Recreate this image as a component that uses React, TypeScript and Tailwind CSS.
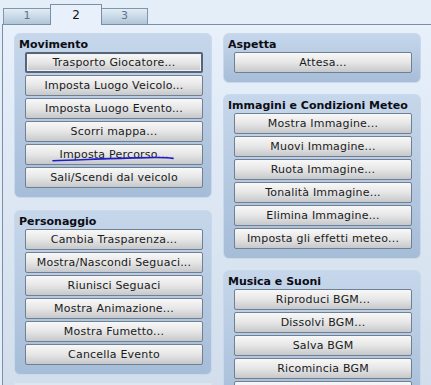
import React from 'react';

type BtnProps = { label: string; primary?: boolean; children?: React.ReactNode };

const Btn: React.FC<BtnProps> = ({ label, primary, children }) => (
  <div
    className={
      'relative h-[21px] flex items-center justify-center rounded-[2px] bg-gradient-to-b from-[#f8f8f8] via-[#e6e6e6] to-[#c6c8cb] text-[11px] tracking-[0.2px] text-[#1a1a20] ' +
      (primary
        ? 'border-2 border-[#56657a] shadow-[inset_0_0_0_1px_#f2f2f2]'
        : 'border border-[#717f92]')
    }
  >
    <span className="leading-none pb-px">{label}</span>
    {children}
  </div>
);

type GroupProps = { title: string; buttons: string[]; primaryFirst?: boolean; annotate?: number };

const Group: React.FC<GroupProps> = ({ title, buttons, primaryFirst, annotate }) => (
  <div className="rounded-[6px] border border-[#c9d8ea] bg-gradient-to-b from-[#c6d7eb] to-[#a6bdd8] pt-[3px] pb-[9px] pl-[3px] pr-[8px]">
    <div className="h-[15px] leading-[15px] text-[11px] font-bold text-[#0c0c14] pl-px">{title}</div>
    <div className="flex flex-col gap-[2px] pl-[7px]">
      {buttons.map((b, i) => (
        <Btn key={i} label={b} primary={primaryFirst && i === 0}>
          {annotate === i && (
            // hand-drawn blue scribble under the label
            <svg className="absolute left-0 top-0 pointer-events-none" width="178" height="21" viewBox="0 0 178 21">
              <path
                d="M27,15.8 C50,15.2 80,13.6 110,12.9 C128,12.4 140,12 147,13.4"
                fill="none"
                stroke="#1d1dcc"
                strokeWidth="1.6"
                strokeLinecap="round"
              />
            </svg>
          )}
        </Btn>
      ))}
    </div>
  </div>
);

const App: React.FC = () => {
  return (
    <div
      className="w-[431px] h-[385px] overflow-hidden bg-[#e4eef9]"
      style={{ fontFamily: '"DejaVu Sans", sans-serif' }}
    >
      {/* Tabs */}
      <div className="flex items-end h-[24px] ml-[3px]">
        <div className="w-[48px] h-[16px] border border-b-0 border-[#8395ab] bg-gradient-to-b from-[#e2edf6] to-[#b0c6d9] flex items-center justify-center text-[11px] text-[#5f738b]">
          1
        </div>
        <div className="relative z-10 -ml-px -mb-px w-[52px] h-[21px] border border-b-0 border-[#7b8ea6] bg-[#e7f0fb] flex items-center justify-center text-[12px] text-[#101010]">
          2
        </div>
        <div className="-ml-px w-[47px] h-[16px] border border-b-0 border-[#8395ab] bg-gradient-to-b from-[#e2edf6] to-[#b0c6d9] flex items-center justify-center text-[11px] text-[#5f738b]">
          3
        </div>
      </div>

      {/* Panel */}
      <div className="ml-[2px] h-[361px] border-l border-t border-[#7b8ea6] bg-gradient-to-b from-[#e7f0fb] to-[#d2deec] pl-[11px] pt-[8px] flex gap-[11px]">
        <div className="w-[198px] flex flex-col gap-[12px] shrink-0">
          <Group
            title="Movimento"
            primaryFirst
            annotate={4}
            buttons={[
              'Trasporto Giocatore...',
              'Imposta Luogo Veicolo...',
              'Imposta Luogo Evento...',
              'Scorri mappa...',
              'Imposta Percorso...',
              'Sali/Scendi dal veicolo',
            ]}
          />
          <Group
            title="Personaggio"
            buttons={[
              'Cambia Trasparenza...',
              'Mostra/Nascondi Seguaci...',
              'Riunisci Seguaci',
              'Mostra Animazione...',
              'Mostra Fumetto...',
              'Cancella Evento',
            ]}
          />
          {/* next group, only its top edge is visible */}
          <div className="-mt-[4px] h-[40px] rounded-[6px] border border-[#dde7f2] bg-[#c6d7eb]" />
        </div>
        <div className="w-[198px] flex flex-col gap-[11px] shrink-0">
          <Group title="Aspetta" buttons={['Attesa...']} />
          <Group
            title="Immagini e Condizioni Meteo"
            buttons={[
              'Mostra Immagine...',
              'Muovi Immagine...',
              'Ruota Immagine...',
              'Tonalità Immagine...',
              'Elimina Immagine...',
              'Imposta gli effetti meteo...',
            ]}
          />
          <Group
            title="Musica e Suoni"
            buttons={['Riproduci BGM...', 'Dissolvi BGM...', 'Salva BGM', 'Ricomincia BGM', '']}
          />
        </div>
      </div>
    </div>
  );
};

export default App;
